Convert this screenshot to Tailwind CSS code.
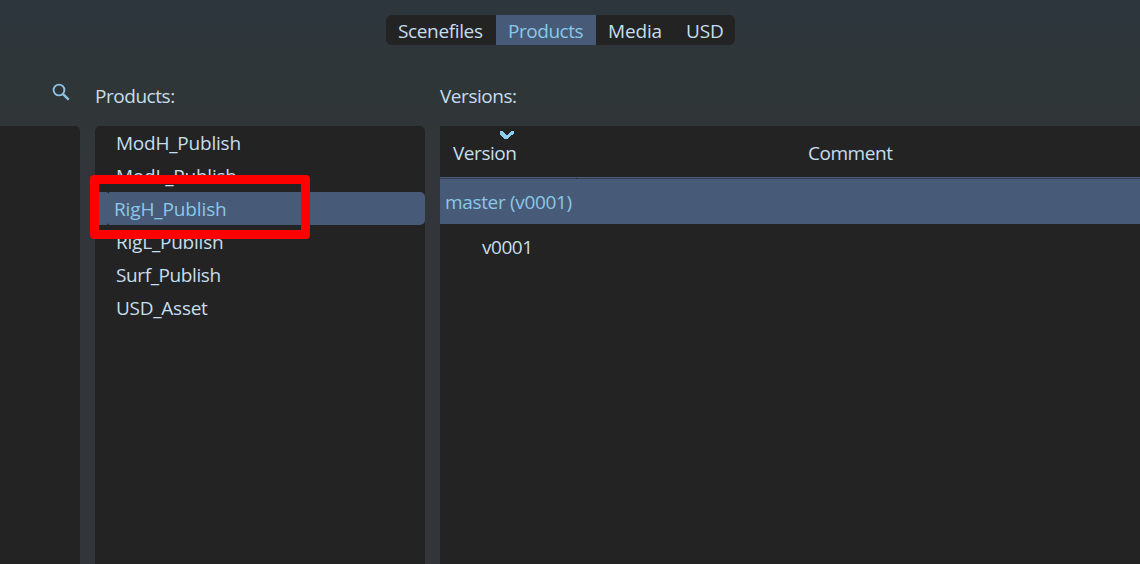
<!DOCTYPE html>
<html lang="en">
<head>
<meta charset="utf-8">
<title>Products</title>
<script src="https://cdn.jsdelivr.net/npm/@tailwindcss/browser@4"></script>
</head>
<body class="relative flex h-[564px] w-[1140px] flex-col overflow-hidden bg-linear-to-b from-[#2c363c] via-[#303637] via-20% to-[#32363a] to-30% font-['Open_Sans','Noto_Sans',sans-serif] text-[19px] leading-[30px] font-normal tracking-[-0.46px] whitespace-nowrap text-[#c6deed]">
  <nav class="mt-[15px] ml-[386px] flex h-[30px] w-[349px] shrink-0 overflow-hidden rounded-md bg-[#232323] leading-[32px]">
    <div class="w-[110px] pl-3 tracking-[-0.36px]">Scenefiles</div>
    <div class="w-[100px] bg-[#475a77] pl-3 text-[#8bc8e8]">Products</div>
    <div class="w-[78px] pl-3 tracking-[-0.15px]">Media</div>
    <div class="pl-3 tracking-[-0.1px]">USD</div>
  </nav>
  <div class="mt-[35px] flex h-[46px] shrink-0 leading-[32px]">
    <div class="w-[95px] pt-[3px] pl-[52px]">
      <svg class="size-[19px]" viewBox="0 0 19 19" fill="none" stroke="#8bc5e3"><circle cx="7" cy="7" r="5.4" stroke-width="1.9"/><path d="M10.8 10.8 L16.7 16.7" stroke-width="2.4"/></svg>
    </div>
    <div class="w-[345px]">Products:</div>
    <div>Versions:</div>
  </div>
  <main class="flex min-h-0 flex-1 gap-[15px]">
    <section class="w-20 rounded-tr-[5px] bg-[#232323]"></section>
    <section class="w-[330px] rounded-t-[5px] bg-[#232323] leading-[34px] tracking-[-0.22px]">
      <div class="h-[33px] pl-[21px]">ModH_Publish</div>
      <div class="h-[33px] pl-[21px]">ModL_Publish</div>
      <div class="flex h-[33px] tracking-[-0.13px] text-[#8bc8e8]">
        <div class="w-[14px] rounded-r-[3px] bg-[#475a77]"></div>
        <div class="flex-1 rounded-r-[5px] bg-[#475a77] pl-[5px]">RigH_Publish</div>
      </div>
      <div class="h-[33px] pl-[21px]">RigL_Publish</div>
      <div class="h-[33px] pl-[21px] tracking-[-0.4px]">Surf_Publish</div>
      <div class="h-[33px] pl-[21px] tracking-[-0.26px]">USD_Asset</div>
    </section>
    <section class="flex-1 bg-[#232323]">
      <header class="flex h-[51px]">
        <div class="w-[368px] pl-[13px]">
          <svg class="ml-[47px] mt-[5px] block h-2 w-[14px]" viewBox="0 0 14 8" fill="#8fceef" shape-rendering="crispEdges"><path d="M0 0h3v1h1v1h1v1h1v1h2v-1h1v-1h1v-1h1v-1h3v3h-1v1h-2v1h-1v1h-1v1h-1v1h-4v-1h-1v-1h-1v-1h-1v-1h-2v-1h-1z"/></svg>
          <div class="-mt-px">Version</div>
        </div>
        <div class="pt-3">Comment</div>
      </header>
      <div class="h-[47px] border-t border-[#475a77] bg-[#475a77]">
        <div class="flex h-px bg-[#353e4f]"><div class="ml-[136px] w-px bg-[#232323]"></div></div>
        <div class="pl-[5px] leading-[46px] tracking-[-0.34px] text-[#8bc8e8]">master (v0001)</div>
      </div>
      <div class="pl-[42px] leading-[46px]">v0001</div>
    </section>
  </main>
  <div class="absolute top-[175px] left-[90px] h-16 w-[220px] rounded-[4px] bg-[#ff0000] [clip-path:polygon(evenodd,0_0,220px_0,220px_64px,0_64px,0_0,9px_9px,211px_9px,211px_55px,9px_55px,9px_9px)]"></div>
</body>
</html>
